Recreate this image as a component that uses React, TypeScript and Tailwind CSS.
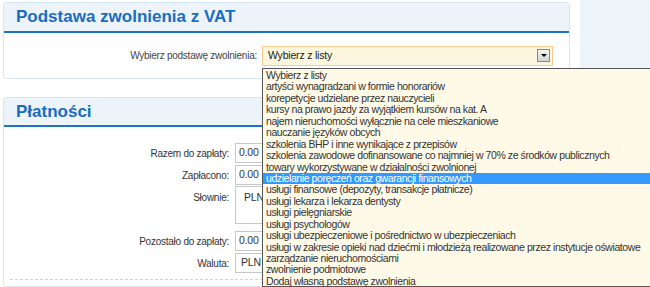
import React from "react";

const items = [
  "Wybierz z listy",
  "artyści wynagradzani w formie honorariów",
  "korepetycje udzielane przez nauczycieli",
  "kursy na prawo jazdy za wyjątkiem kursów na kat. A",
  "najem nieruchomości wyłącznie na cele mieszkaniowe",
  "nauczanie języków obcych",
  "szkolenia BHP i inne wynikające z przepisów",
  "szkolenia zawodowe dofinansowane co najmniej w 70% ze środków publicznych",
  "towary wykorzystywane w działalności zwolnionej",
  "udzielanie poręczeń oraz gwarancji finansowych",
  "usługi finansowe (depozyty, transakcje płatnicze)",
  "usługi lekarza i lekarza dentysty",
  "usługi pielęgniarskie",
  "usługi psychologów",
  "usługi ubezpieczeniowe i pośrednictwo w ubezpieczeniach",
  "usługi w zakresie opieki nad dziećmi i młodzieżą realizowane przez instytucje oświatowe",
  "zarządzanie nieruchomościami",
  "zwolnienie podmiotowe",
  "Dodaj własną podstawę zwolnienia",
];

function Row({ label, children }: { label: string; children: React.ReactNode }) {
  return (
    <div className="flex items-center h-[22px]">
      <div className="w-[231px] pr-[6px] text-right text-[10px] tracking-[-0.25px] text-[#333]">{label}</div>
      {children}
    </div>
  );
}

const inputCls =
  "w-[60px] h-[20px] border border-[#c8c8c8] bg-white text-[10.5px] tracking-[-0.2px] text-[#333] flex items-center";

export default function App() {
  return (
    <div
      className="relative w-[650px] h-[287px] overflow-hidden bg-white flex"
      style={{ fontFamily: '"Liberation Sans", Arial, sans-serif' }}
    >
      <div className="w-[570px] pl-[3px] pt-[2px] flex flex-col gap-[18px]">
        {/* Panel 1 */}
        <div className="border border-[#d5e5f1] rounded-[3px] bg-white">
          <div className="h-[30px] bg-[#edf4f9] border-b-2 border-[#1b72c9] pl-[12px] flex items-center">
            <span className="text-[17px] font-bold text-[#1a6cc2]">Podstawa zwolnienia z VAT</span>
          </div>
          <div className="h-[45px] flex items-center">
            <div className="w-[253px] text-right text-[10px] tracking-[-0.25px] text-[#444]">Wybierz podstawę zwolnienia:</div>
            <div className="ml-[5px] w-[291px] h-[20px] border border-[#f2cc90] bg-[#fdf6df] flex items-center pl-[5px] justify-between pr-[2px]">
              <span className="text-[10.5px] tracking-[-0.2px] text-[#222]">Wybierz z listy</span>
              <div className="w-[13px] h-[13px] border border-[#888] bg-gradient-to-b from-[#f4f4f4] to-[#d4d4d4] flex items-center justify-center">
                <div className="w-0 h-0 border-l-[3px] border-r-[3px] border-t-[3px] border-l-transparent border-r-transparent border-t-black" />
              </div>
            </div>
          </div>
        </div>
        {/* Panel 2 */}
        <div className="border border-[#d5e5f1] rounded-[3px] bg-white flex-1">
          <div className="h-[29px] bg-[#edf4f9] border-b-2 border-[#1b72c9] pl-[12px] flex items-center">
            <span className="text-[17px] font-bold text-[#1a6cc2]">Płatności</span>
          </div>
          <div className="pt-[15px] flex flex-col">
            <Row label="Razem do zapłaty:">
              <div className={`${inputCls} pl-[3px]`}>0.00</div>
            </Row>
            <Row label="Zapłacono:">
              <div className={`${inputCls} pl-[3px]`}>0.00</div>
            </Row>
            <div className="flex items-start h-[44px]">
              <div className="w-[231px] pr-[6px] pt-[4px] text-right text-[10px] tracking-[-0.25px] text-[#333]">Słownie:</div>
              <div className="w-[60px] h-[38px] border border-[#c8c8c8] pl-[8px] pt-[3px] text-[10.5px] tracking-[-0.2px] text-[#333]">PLN</div>
            </div>
            <Row label="Pozostało do zapłaty:">
              <div className={`${inputCls} pl-[3px]`}>0.00</div>
            </Row>
            <Row label="Waluta:">
              <div className={`${inputCls} pl-[5px]`}>PLN</div>
            </Row>
            <div className="mt-[5px] mx-[6px] border-t border-dashed border-[#bcd8ee]" />
          </div>
        </div>
      </div>
      <div className="w-[10px]" />
      <div className="flex-1 bg-[#eef5fa]" />

      {/* Dropdown list overlay */}
      <div className="absolute left-[262px] top-[68px] w-[400px] h-[219px] bg-[#fffae8] border border-[#555] pt-[1px]">
        {items.map((t, i) => (
          <div
            key={i}
            className={`h-[11.45px] leading-[11.45px] pl-[3px] text-[10.5px] tracking-[-0.42px] whitespace-nowrap ${
              i === 9 ? "bg-[#3399ff] text-white" : "text-[#333]"
            }`}
          >
            {t}
          </div>
        ))}
      </div>
    </div>
  );
}
